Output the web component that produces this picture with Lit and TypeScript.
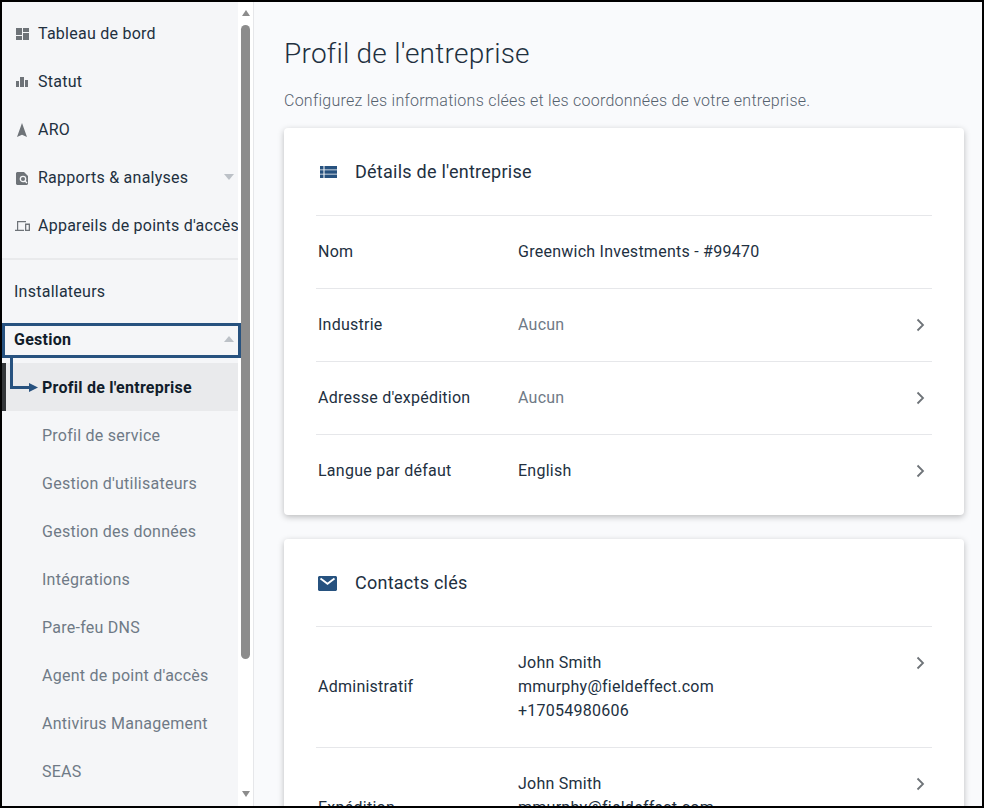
import { LitElement, html, css, svg } from 'lit';
import { customElement } from 'lit/decorators.js';

const chevron = html`<svg class="chev" viewBox="0 0 12 14" width="12" height="14">
  <path d="M2.500 1.500l5.500 5.500-5.500 5.500" fill="none" stroke="currentColor" stroke-width="1.800"></path>
</svg>`;

const topItems = [
  {
    label: 'Tableau de bord',
    icon: svg`<path d="M0 3h6v7H0zM0 11h6v4H0zM7 8h6v7H7zM7 3h6v4H7z"/>`,
  },
  {
    label: 'Statut',
    icon: svg`<path d="M0 8h3v6H0zM4 4h4v10H4zM9 7h3v7H9z"/>`,
  },
  {
    label: 'ARO',
    icon: svg`<path d="M6 2l5 14-5-2.200L1 16z"/>`,
  },
  {
    label: 'Rapports & analyses',
    caret: 'down',
    icon: svg`<path d="M1 3h7l4 4v8l-1 1H1l-1-1V4z"/>
      <circle cx="7" cy="10" r="2.700" fill="none" stroke="#f5f6f8" stroke-width="1.300"/>
      <path d="M9 12l2 2" fill="none" stroke="#f5f6f8" stroke-width="1.300"/>`,
  },
];

const subItems = [
  'Profil de service',
  "Gestion d'utilisateurs",
  'Gestion des données',
  'Intégrations',
  'Pare-feu DNS',
  "Agent de point d'accès",
  'Antivirus Management',
  'SEAS',
];

@customElement('app-root')
export class AppRoot extends LitElement {
  static styles = css`
    :host {
      display: block;
      width: 984px;
      height: 808px;
      box-sizing: border-box;
      border: 2px solid #000;
      overflow: hidden;
      position: relative;
      font-family: Roboto, 'Liberation Sans', sans-serif;
      font-size: 16px;
      color: #22303f;
      letter-spacing: 0.25px;
    }
    .page {
      display: flex;
      height: 100%;
    }
    .side {
      display: flex;
      flex: none;
      width: 251px;
      border-right: 1px solid #e6e7ea;
      background: #fff;
    }
    nav {
      flex: none;
      width: 236px;
      background: #f5f6f8;
      padding-top: 7px;
      overflow: hidden;
    }
    .row {
      display: flex;
      align-items: center;
      height: 48px;
      white-space: nowrap;
      position: relative;
    }
    .row.top {
      padding-left: 14px;
      gap: 9px;
    }
    .row.top svg.ic {
      flex: none;
      width: 13px;
      height: 16px;
      fill: #6e7378;
    }
    .row.dev {
      padding-left: 12px;
      gap: 6px;
    }
    .row.top.dev svg.ic {
      width: 18px;
    }
    .row.plain {
      padding-left: 12px;
    }
    .row.sub {
      padding-left: 40px;
      color: #6f7a86;
    }
    .row.gest {
      font-weight: 700;
      color: #111d2b;
    }
    .row.active {
      margin-left: 4px;
      padding-left: 36px;
      background: #e9eaec;
      color: #111d2b;
      font-weight: 700;
    }
    .mark {
      position: absolute;
      left: -4px;
      top: 0;
      width: 4px;
      height: 48px;
      background: #333639;
    }
    .caret {
      position: absolute;
      right: 4px;
      top: 21px;
      width: 0;
      height: 0;
      border-left: 5.5px solid transparent;
      border-right: 5.5px solid transparent;
    }
    .caret.down {
      border-top: 6px solid #bcc1c7;
    }
    .caret.up {
      border-bottom: 6px solid #bcc1c7;
    }
    hr {
      border: 0;
      height: 2px;
      background: #e9eaec;
      margin: 9px 0 7px;
    }
    .bar {
      flex: none;
      width: 15px;
      display: flex;
      flex-direction: column;
      align-items: center;
      padding: 8px 0 0;
      box-sizing: border-box;
    }
    .bar i {
      display: block;
      width: 0;
      height: 0;
      border-left: 4.5px solid transparent;
      border-right: 4.5px solid transparent;
    }
    .bar .up {
      border-bottom: 6px solid #8c8c8c;
    }
    .bar .dn {
      border-top: 6px solid #8c8c8c;
    }
    .thumb {
      width: 9px;
      height: 634px;
      margin: 9px 0 132px;
      border-radius: 5px;
      background: #8c8c8c;
    }
    main {
      flex: 1;
      min-width: 0;
      background: #f9fafc;
      padding: 34px 18px 0 30px;
      overflow: hidden;
    }
    h1 {
      margin: 0;
      height: 36px;
      line-height: 36px;
      font-size: 28px;
      font-weight: 300;
      color: #22303f;
      white-space: nowrap;
    }
    .intro {
      margin: 19px 0 0;
      height: 20px;
      line-height: 20px;
      font-weight: 300;
      color: #55616e;
      white-space: nowrap;
    }
    .card {
      background: #fff;
      border-radius: 4px;
      box-shadow: 0 2px 6px rgba(0, 0, 0, 0.25);
      padding: 0 32px 8px;
      margin-top: 24px;
    }
    .intro + .card {
      margin-top: 17px;
    }
    .head {
      display: flex;
      align-items: center;
      height: 87px;
      border-bottom: 1px solid #e6e7ea;
      font-size: 18px;
      padding-left: 2px;
      gap: 17px;
    }
    .head svg {
      flex: none;
      width: 20px;
      height: 16px;
      fill: #27527f;
    }
    .line {
      display: flex;
      align-items: center;
      min-height: 72px;
      padding: 0 5px 0 2px;
      line-height: 24px;
    }
    .line + .line {
      border-top: 1px solid #e6e7ea;
    }
    .line.multi {
      padding: 24px 5px 24px 2px;
      min-height: 0;
      align-items: flex-start;
    }
    .line.multi .k {
      align-self: center;
    }
    .line.multi .chev {
      margin-top: 5px;
    }
    .k {
      flex: none;
      width: 200px;
    }
    .v {
      flex: 1;
    }
    .v.none {
      color: #6f7a86;
    }
    .chev {
      flex: none;
      color: #6e7378;
    }
    .note {
      position: absolute;
      left: 0;
      top: 321px;
      width: 239px;
      height: 35px;
      box-sizing: border-box;
      border: 3px solid #27527f;
      pointer-events: none;
    }
    .arrow {
      position: absolute;
      left: 7px;
      top: 354px;
    }
  `;

  row(k: string, v: unknown, cls = '', go = true) {
    return html`<div class="line">
      <div class="k">${k}</div>
      <div class="v ${cls}">${v}</div>
      ${go ? chevron : ''}
    </div>`;
  }

  contact(k: string, lines: string[]) {
    return html`<div class="line multi">
      <div class="k">${k}</div>
      <div class="v">${lines.map((l) => html`<div>${l}</div>`)}</div>
      ${chevron}
    </div>`;
  }

  render() {
    const person = ['John Smith', 'mmurphy@fieldeffect.com', '+17054980606'];
    return html`
      <div class="page">
        <div class="side">
          <nav>
            ${topItems.map(
              (it) => html`<div class="row top">
                <svg class="ic" viewBox="0 0 13 16">${it.icon}</svg>
                ${it.label}
                ${it.caret ? html`<span class="caret down"></span>` : ''}
              </div>`,
            )}
            <div class="row top dev">
              <svg class="ic" viewBox="0 0 18 16">
                <path
                  fill-rule="evenodd"
                  d="M3 4h9v1.200H4.200v7.500H10V14H1v-1.300h2zM11 6.500h5V14h-5zM12.300 8v4.700h2.400V8z"
                ></path>
              </svg>
              Appareils de points d'accès
            </div>
            <hr />
            <div class="row plain">Installateurs</div>
            <div class="row plain gest">Gestion<span class="caret up"></span></div>
            <div class="row active"><span class="mark"></span>Profil de l'entreprise</div>
            ${subItems.map((s) => html`<div class="row sub">${s}</div>`)}
          </nav>
          <div class="bar">
            <i class="up"></i>
            <div class="thumb"></div>
            <i class="dn"></i>
          </div>
        </div>
        <main>
          <h1>Profil de l'entreprise</h1>
          <p class="intro">Configurez les informations clées et les coordonnées de votre entreprise.</p>
          <section class="card">
            <div class="head">
              <svg viewBox="0 0 20 16">
                <path d="M2 2h3.500v3.400H2zM6.500 2H19v3.400H6.500zM2 6.300h3.500v3.400H2zM6.500 6.300H19v3.400H6.500zM2 10.600h3.500V14H2zM6.500 10.600H19V14H6.500z"></path>
              </svg>
              Détails de l'entreprise
            </div>
            ${this.row('Nom', 'Greenwich Investments - #99470', '', false)}
            ${this.row('Industrie', 'Aucun', 'none')}
            ${this.row("Adresse d'expédition", 'Aucun', 'none')}
            ${this.row('Langue par défaut', 'English')}
          </section>
          <section class="card">
            <div class="head">
              <svg viewBox="0 0 20 16">
                <path d="M1 1h17l1 1v13l-1 1H1l-1-1V2z"></path>
                <path d="M2.500 3.500L9.500 8.800l7-5.300" fill="none" stroke="#fff" stroke-width="1.800"></path>
              </svg>
              Contacts clés
            </div>
            ${this.contact('Administratif', person)} ${this.contact('Expédition', person)}
          </section>
        </main>
      </div>
      <div class="note"></div>
      <svg class="arrow" width="30" height="38" viewBox="0 0 30 38">
        <path d="M2.500 0v31.500H21" fill="none" stroke="#27527f" stroke-width="3"></path>
        <path d="M20 27l9 4.500-9 4.500z" fill="#27527f"></path>
      </svg>
    `;
  }
}
